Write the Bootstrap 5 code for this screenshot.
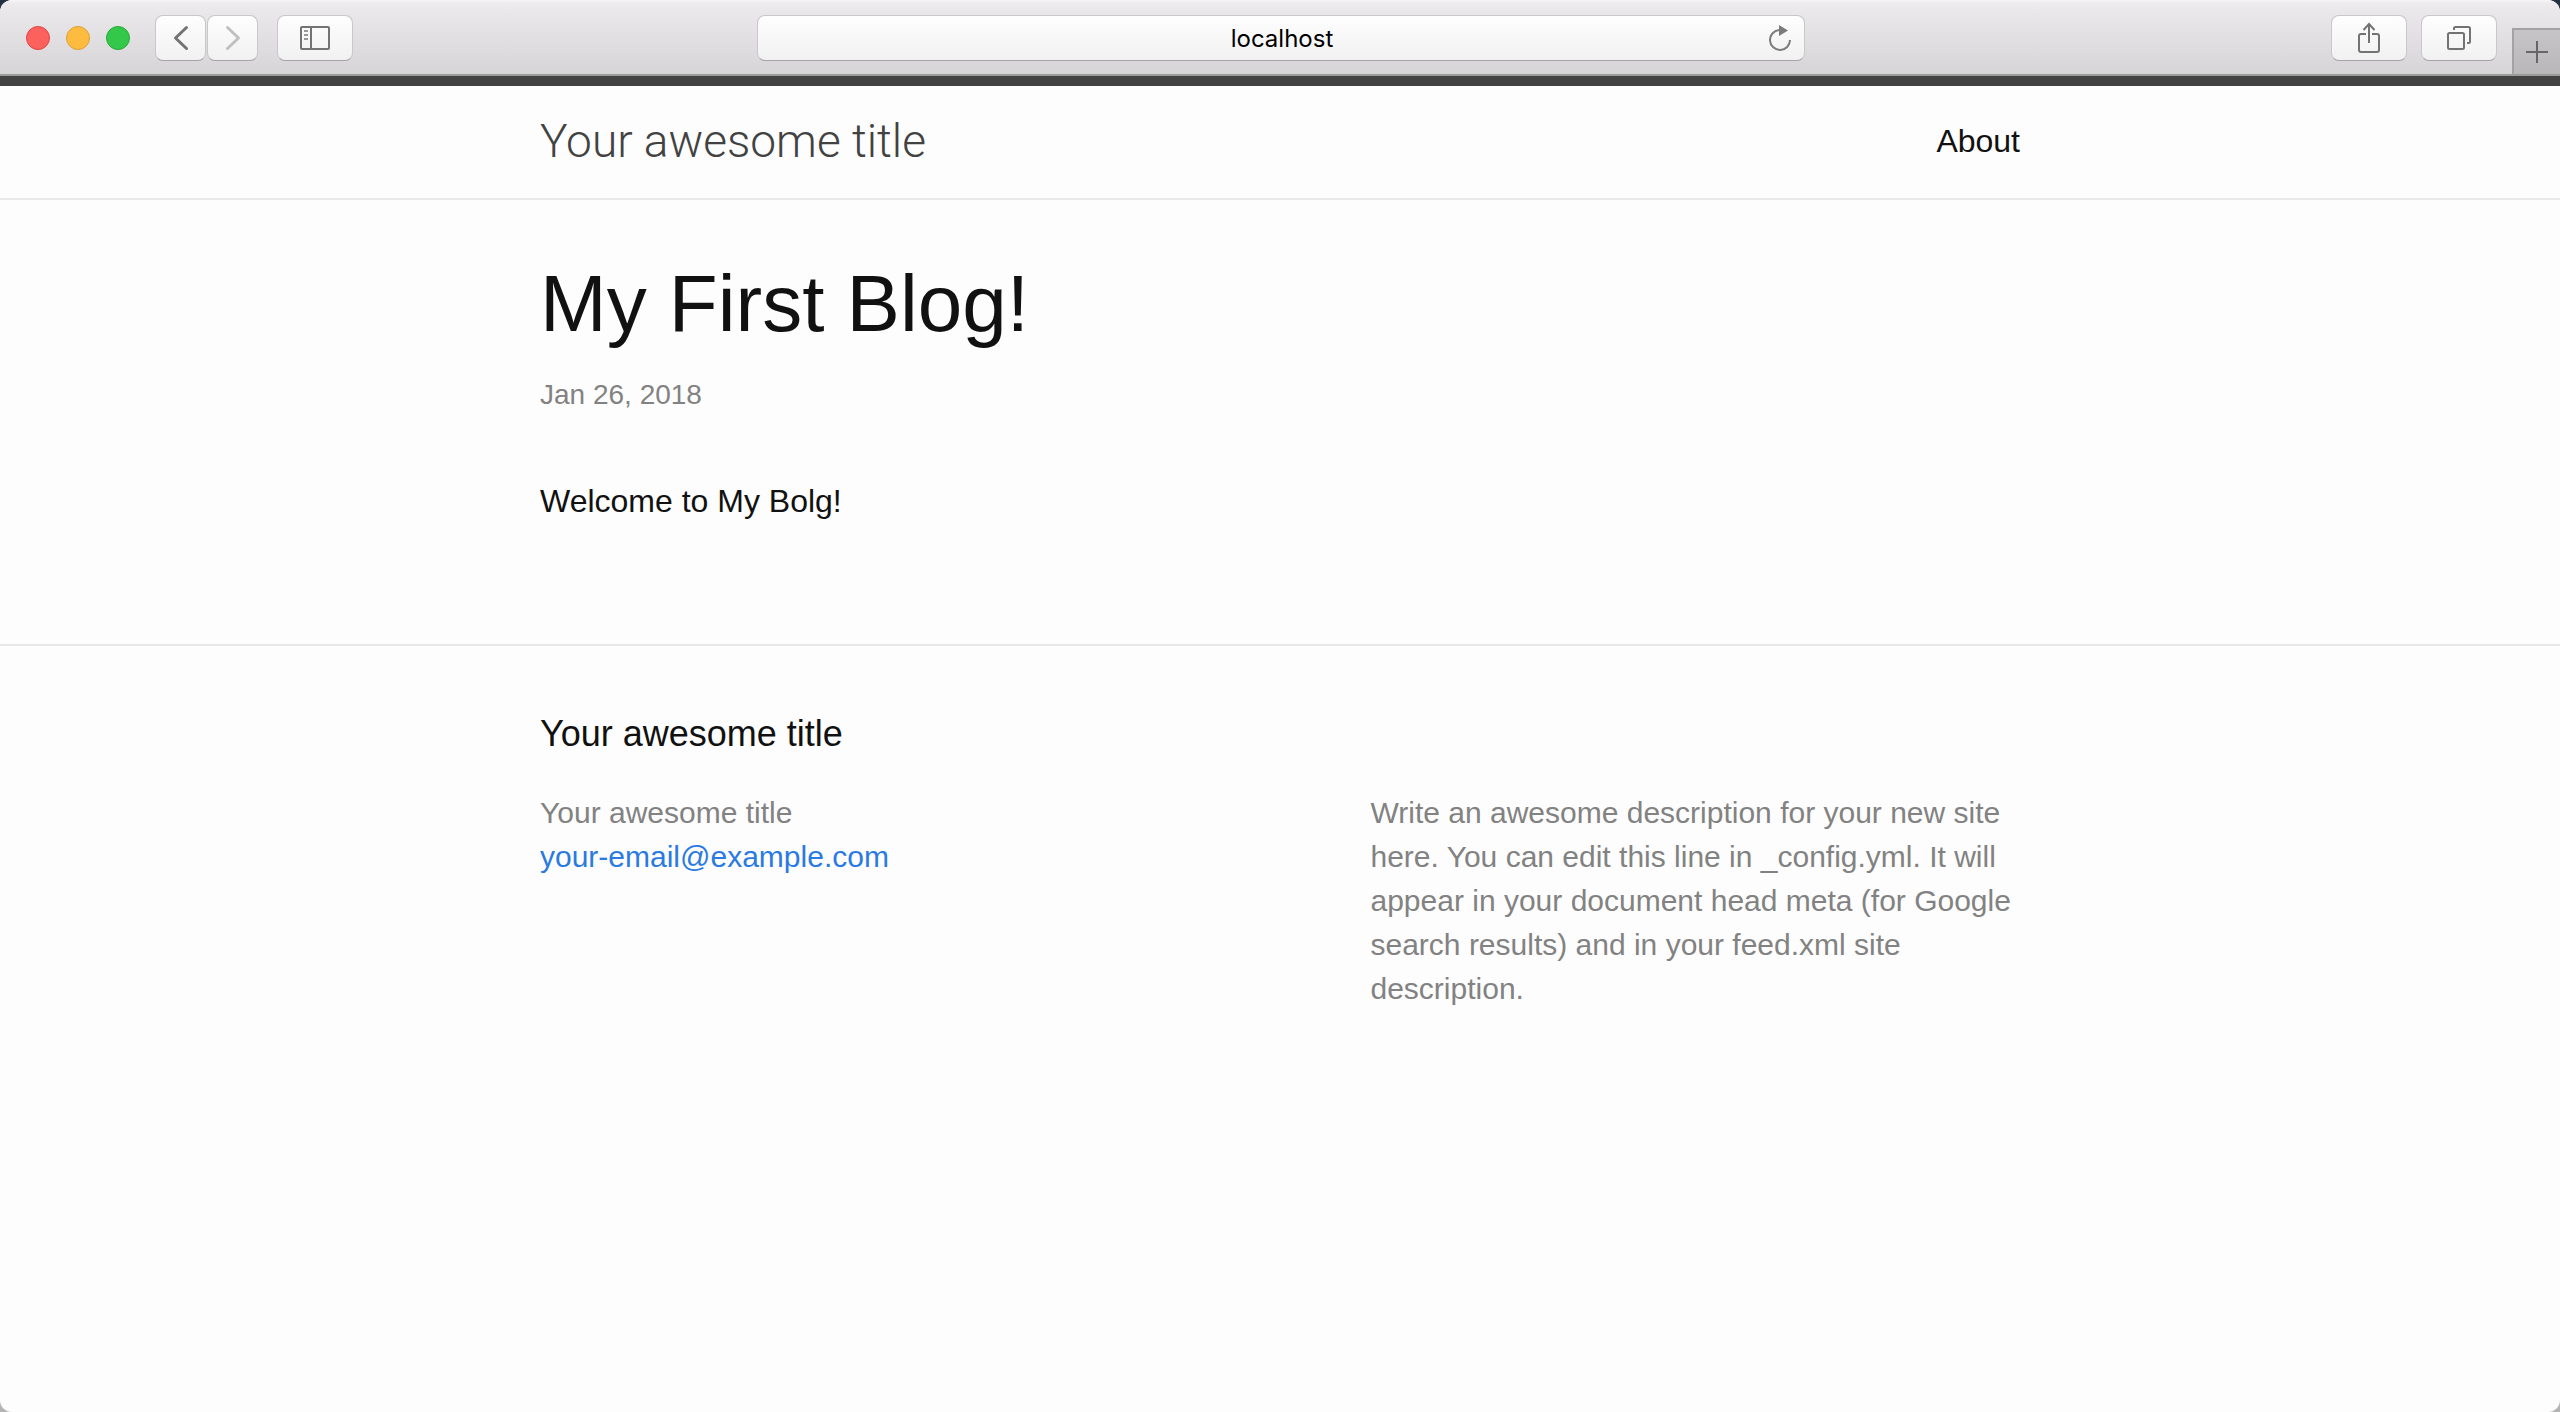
<!DOCTYPE html>
<html lang="en">
<head>
<meta charset="utf-8">
<meta name="viewport" content="width=device-width, initial-scale=1">
<title>My First Blog!</title>
<link href="https://cdn.jsdelivr.net/npm/bootstrap@5.3.0/dist/css/bootstrap.min.css" rel="stylesheet">
<style>
html{background:linear-gradient(#26313f 0,#26313f 50%,#b4b4b4 50%)}
body{background:transparent;font-family:"Liberation Sans",Arial,sans-serif;font-size:32px;line-height:50px;color:#111}
a{text-decoration:none}
.window{border-radius:12px;background:#fdfdfd}
.toolbar{background:linear-gradient(#f6f4f7 0,#eceaed 4px,#d6d4d7 100%);border-bottom:2px solid #9c9b9c;height:76px}
.tool-side{flex:1 1 0}
.tool-group{padding-top:15px}
.light{width:24px;height:24px;border-radius:50%;border:1px solid}
.light-red{background:#fc615d;border-color:#e2443f}
.light-yellow{background:#fdbc40;border-color:#de9f34}
.light-green{background:#34c84a;border-color:#27aa35}
.lights{gap:16px;padding:0 25px 0 26px}
.nav-pair{gap:1px;margin-right:19px}
.tab-pair{gap:14px}
.tool{height:46px;border:1px solid #c9c7ca;border-bottom-color:#a5a4a6;border-radius:8px;background:linear-gradient(#fefefe,#f1f1f1);color:#737373;padding:0;display:flex;align-items:center;justify-content:center}
.tool-nav{width:51px}
.tool-wide{width:76px}
.tool:disabled{color:#c0c0c0}
.address{width:41%;padding:15px 0 0 2px}
.address-input{width:100%;display:block;text-align:center;color:#000;font-family:Inter,sans-serif;font-size:24px;cursor:text;padding:2px 0 0 2px}
.reload{right:10px;top:15px;width:30px;height:46px}
.new-tab{width:48px;height:46px;margin:28px 0 0 15px;border:solid #a3a2a4;border-width:2px 0 0 2px;background:linear-gradient(#c6c4c7,#b9b7ba);color:#666}
.site-width{width:100%;max-width:1540px;margin:0 auto;padding:0 30px}
.site-header{border-top:10px solid #424242;border-bottom:2px solid #e8e8e8}
.site-bar{min-height:112px;padding-bottom:2px}
.site-title{font-family:Roboto,"Liberation Sans",sans-serif;font-weight:300;font-size:46px;line-height:56px;color:#424242}
.site-link{color:#111}
.post{padding-top:60px;padding-bottom:118px}
.post-title{font-size:80px;line-height:88px;font-weight:400;margin:0 0 25px}
.post-date{font-size:28px;line-height:44px;color:#828282;margin:0 0 59px}
.site-footer{border-top:2px solid #e8e8e8;padding:61px 0}
.footer-title{font-size:36px;line-height:54px;font-weight:400;margin:0 0 30px}
.footer-cols{--bs-gutter-x:30px;font-size:30px;line-height:44px;color:#828282}
.mail{color:#2a7ae2}
@media (min-width:1200px){.foot-a{width:35%}.foot-b{width:20%}.foot-c{width:45%}}
</style>
<script src="https://cdn.jsdelivr.net/npm/bootstrap@5.3.0/dist/js/bootstrap.bundle.min.js"></script>
</head>
<body>
<div class="window min-vh-100 overflow-hidden">
  <div class="toolbar d-flex align-items-start">
    <div class="tool-side tool-group d-flex align-items-center">
      <div class="lights d-flex">
        <span class="light light-red"></span><span class="light light-yellow"></span><span class="light light-green"></span>
      </div>
      <div class="nav-pair d-flex">
        <button class="tool tool-nav" type="button" aria-label="Back"><svg width="16" height="26" viewBox="0 0 16 26" fill="none" stroke="currentColor" stroke-width="3" stroke-linecap="round" stroke-linejoin="round"><path d="M13.500 2.500 2.500 13l11 10.500"/></svg></button>
        <button class="tool tool-nav" type="button" aria-label="Forward" disabled><svg width="16" height="26" viewBox="0 0 16 26" fill="none" stroke="currentColor" stroke-width="3" stroke-linecap="round" stroke-linejoin="round"><path d="M2.500 2.500 13.500 13l-11 10.500"/></svg></button>
      </div>
      <button class="tool tool-wide" type="button" aria-label="Show sidebar"><svg width="30" height="24" viewBox="0 0 30 24" fill="none" stroke="currentColor" stroke-width="2"><rect x="1" y="1" width="28" height="22" rx="1"/><path d="M11 1v22"/><path d="M4 5h4M4 9h4M4 13h4" stroke="#999"/></svg></button>
    </div>
    <div class="address position-relative">
      <input class="tool address-input" type="text" value="localhost" aria-label="Address">
      <button class="reload btn border-0 p-0 position-absolute d-flex align-items-center justify-content-center" type="button" aria-label="Reload"><svg width="24" height="28" viewBox="0 0 24 28" fill="none" stroke="#7b7b7b" stroke-width="2"><path d="M11 6A10 10 0 1 0 22 16"/><path d="M11 1l9 5.500-9 5.500z" fill="#7b7b7b" stroke="none"/></svg></button>
    </div>
    <div class="tool-side d-flex align-items-start justify-content-end">
      <div class="tool-group tab-pair d-flex">
        <button class="tool tool-wide" type="button" aria-label="Share"><svg width="22" height="32" viewBox="0 0 22 32" fill="none" stroke="currentColor" stroke-width="2"><path d="M8 12H3Q1 12 1 14V28Q1 30 3 30H19Q21 30 21 28V14Q21 12 19 12H14"/><path d="M11 21V2M5.500 8 11 2l5.500 6"/></svg></button>
        <button class="tool tool-wide" type="button" aria-label="Show all tabs"><svg width="24" height="24" viewBox="0 0 24 24" fill="none" stroke="currentColor" stroke-width="2"><rect x="1" y="7" width="16" height="16" rx="1.500"/><path d="M7 4V2.500Q7 1 8.500 1H21.500Q23 1 23 2.500V15.500Q23 17 21.500 17H20"/></svg></button>
      </div>
      <button class="new-tab p-0 d-flex align-items-center justify-content-center" type="button" aria-label="New tab"><svg width="22" height="22" viewBox="0 0 22 22" stroke="currentColor" stroke-width="2"><path d="M11 0v22M0 11h22"/></svg></button>
    </div>
  </div>

  <header class="site-header">
    <div class="site-width">
      <div class="site-bar d-flex align-items-center justify-content-between">
        <a class="site-title" href="#">Your awesome title</a>
        <nav><a class="site-link" href="#">About</a></nav>
      </div>
    </div>
  </header>

  <main class="site-width post">
    <article>
      <h1 class="post-title">My First Blog!</h1>
      <p class="post-date"><time datetime="2018-01-26">Jan 26, 2018</time></p>
      <p class="mb-0">Welcome to My Bolg!</p>
    </article>
  </main>

  <footer class="site-footer">
    <div class="site-width">
      <h2 class="footer-title">Your awesome title</h2>
      <div class="row footer-cols">
        <div class="col-12 foot-a">
          <ul class="list-unstyled mb-0">
            <li>Your awesome title</li>
            <li><a class="mail" href="mailto:your-email@example.com">your-email@example.com</a></li>
          </ul>
        </div>
        <div class="col-12 foot-b"></div>
        <div class="col-12 foot-c">
          <p class="mb-0">Write an awesome description for your new site here. You can edit this line in _config.yml. It will appear in your document head meta (for Google search results) and in your feed.xml site description.</p>
        </div>
      </div>
    </div>
  </footer>
</div>
</body>
</html>
